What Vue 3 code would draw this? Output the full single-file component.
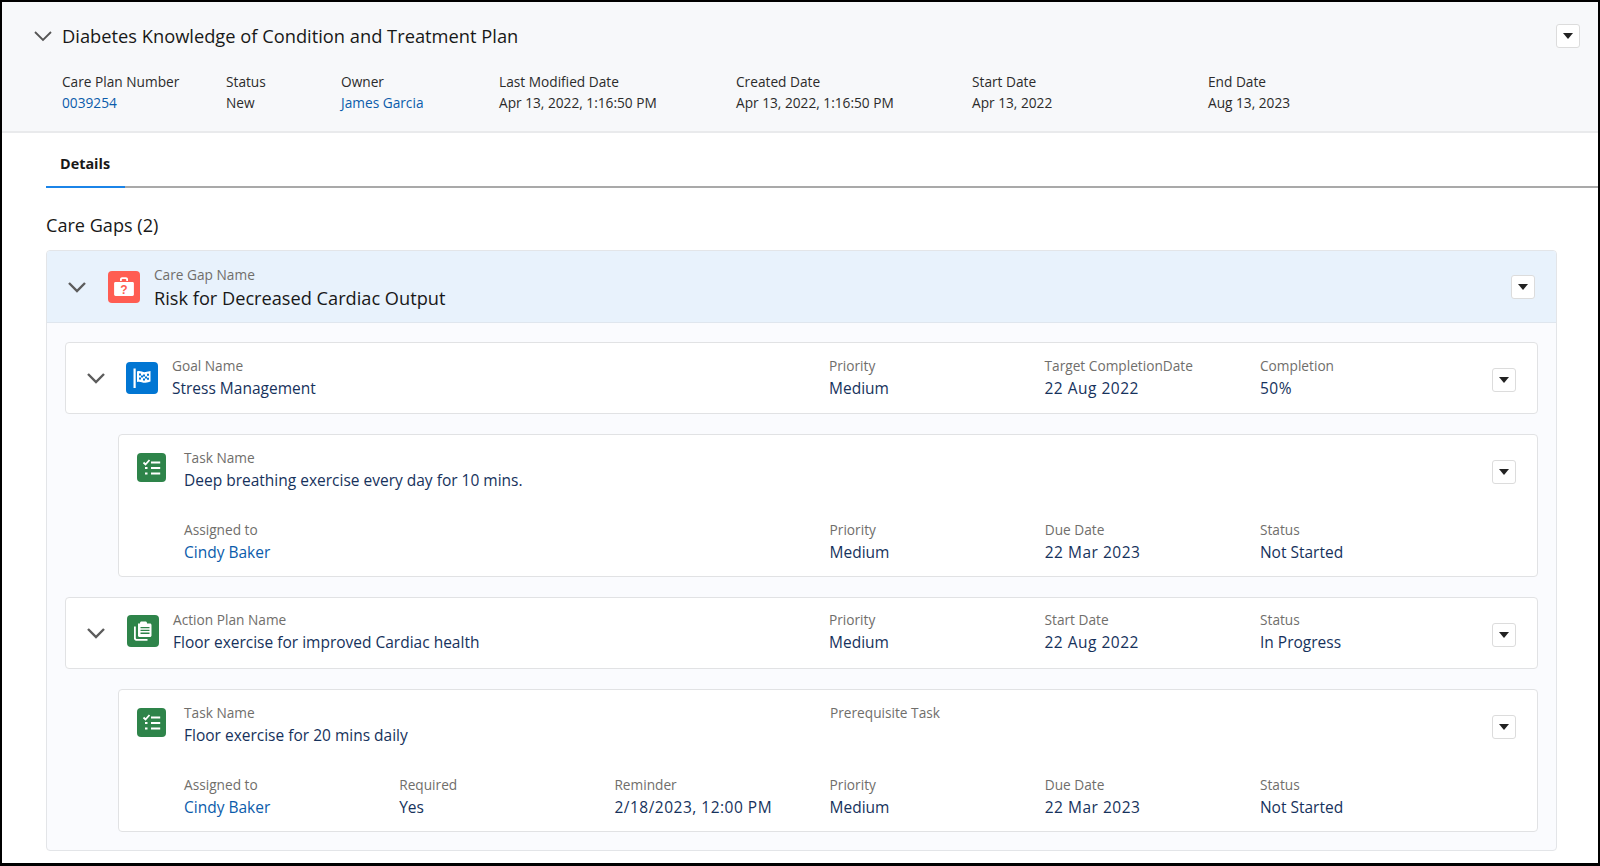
<template>
  <div class="page">
    <!-- 计划头部 -->
    <header class="plan-head">
      <div class="plan-title">
        <svg class="chev chev-sm" viewBox="0 0 20 12"><path d="M2 2l8 8 8-8" /></svg>
        <h1>Diabetes Knowledge of Condition and Treatment Plan</h1>
        <button class="menu-btn"><i></i></button>
      </div>
      <div class="plan-fields">
        <div v-for="f in planFields" :key="f.label" class="plan-field" :style="{ width: f.width + 'px' }">
          <span class="plan-label">{{ f.label }}</span>
          <span :class="f.link ? 'plan-link' : 'plan-value'">{{ f.value }}</span>
        </div>
      </div>
    </header>

    <nav class="tabs">
      <a class="tab">Details</a>
    </nav>

    <h2 class="section-title">Care Gaps (2)</h2>

    <section class="gap">
      <div class="gap-head">
        <svg class="chev" viewBox="0 0 20 12"><path d="M2 2l8 8 8-8" /></svg>
        <svg class="icon icon-lg red" viewBox="0 0 32 32">
          <path d="M12 10V8.2C12 7 13 6.2 14 6.2h4c1 0 2 .8 2 2V10h-1.800V8.600c0-.4-.3-.7-.7-.7h-3c-.4 0-.7.3-.7.7V10z" fill="#fff" />
          <path d="M7.500 11h17c.8 0 1.400.6 1.400 1.400v11.200c0 .8-.6 1.400-1.400 1.400h-17c-.8 0-1.400-.6-1.400-1.400V12.400c0-.8.6-1.400 1.400-1.400z" fill="#fff" />
          <text x="16" y="23" text-anchor="middle" class="qmark">?</text>
        </svg>
        <div class="gap-text">
          <span class="label">Care Gap Name</span>
          <span class="gap-name">Risk for Decreased Cardiac Output</span>
        </div>
        <button class="menu-btn"><i></i></button>
      </div>

      <div class="gap-body">
        <template v-for="p in plans" :key="p.name">
          <div class="card row-card" :class="'row-' + p.icon">
            <svg class="chev" viewBox="0 0 20 12"><path d="M2 2l8 8 8-8" /></svg>
            <svg v-if="p.icon === 'goal'" class="icon icon-lg blue" viewBox="0 0 32 32">
              <path d="M7.500 6.500h2.200V26H7.500z" fill="#fff" />
              <path d="M11 9.500c3-1.300 5.500 1 8.500.6 1.900-.2 3.500-.7 5-1.100v10.500c-1.500.6-3.100 1-5 1.200-3 .4-5.500-1.900-8.500-.6z" fill="#fff" />
              <path d="M13 11.500h2v2h-2zM17 12.500h2v2h-2zM21 11.800h2v2h-2zM15 13.500h2v2h-2zM19 14.500h2v2h-2zM13 15.500h2v2h-2zM17 16.500h2v2h-2zM21 15.800h2v2h-2z" fill="#0176d3" />
            </svg>
            <svg v-else class="icon icon-lg green" viewBox="0 0 32 32">
              <path d="M7 11.500h1.800v11.600c0 .5.400.9.900.9h10.800v1.800H9.200C8 25.800 7 24.800 7 23.600z" fill="#fff" />
              <path d="M11 8.500h2v-.5c0-.9.700-1.500 1.500-1.500h4c.8 0 1.500.6 1.500 1.500v.5h3c.8 0 1.500.7 1.500 1.500v10.500c0 .8-.7 1.500-1.500 1.500H12.500c-.8 0-1.500-.7-1.500-1.500z" fill="#fff" />
              <path d="M13.500 12h9v1.300h-9zM13.500 14.800h9v1.300h-9zM13.500 17.600h9v1.300h-9z" fill="#2e844a" />
            </svg>
            <div class="main">
              <span class="label">{{ p.label }}</span>
              <span class="value">{{ p.name }}</span>
            </div>
            <div v-for="f in p.fields" :key="f.label" class="col">
              <span class="label">{{ f.label }}</span>
              <span class="value" :class="{ num: hasDigit(f.value) }">{{ f.value }}</span>
            </div>
            <button class="menu-btn"><i></i></button>
          </div>

          <div class="card task-card">
            <div class="task-top">
              <svg class="icon icon-sm green" viewBox="0 0 29 29">
                <path d="M6.500 9.500l2 2L12.500 7" class="tick" />
                <path d="M14 8.500h9.200v1.900H14zM14 14h9.200v1.900H14zM14 19.500h9.200v1.900H14zM8 14h2.500v1.900H8zM8 19.500h2.500v1.900H8z" fill="#fff" />
              </svg>
              <div class="task-main">
                <span class="label">Task Name</span>
                <span class="value">{{ p.task.name }}</span>
              </div>
              <div v-if="p.task.prereq" class="col prereq">
                <span class="label">Prerequisite Task</span>
              </div>
              <button class="menu-btn"><i></i></button>
            </div>
            <div class="task-grid">
              <div v-for="(f, i) in p.task.fields" :key="f.label + i" class="grid-cell">
                <span class="label">{{ f.label }}</span>
                <span :class="[f.link ? 'link' : 'value', { num: hasDigit(f.value) }]">{{ f.value }}</span>
              </div>
            </div>
          </div>
        </template>
      </div>
    </section>
  </div>
</template>

<script setup>
const planFields = [
  { label: 'Care Plan Number', value: '0039254', width: 164, link: true },
  { label: 'Status', value: 'New', width: 115 },
  { label: 'Owner', value: 'James Garcia', width: 158, link: true },
  { label: 'Last Modified Date', value: 'Apr 13, 2022, 1:16:50 PM', width: 237 },
  { label: 'Created Date', value: 'Apr 13, 2022, 1:16:50 PM', width: 236 },
  { label: 'Start Date', value: 'Apr 13, 2022', width: 236 },
  { label: 'End Date', value: 'Aug 13, 2023', width: 200 }
]

const plans = [
  {
    icon: 'goal',
    label: 'Goal Name',
    name: 'Stress Management',
    fields: [
      { label: 'Priority', value: 'Medium' },
      { label: 'Target CompletionDate', value: '22 Aug 2022' },
      { label: 'Completion', value: '50%' }
    ],
    task: {
      name: 'Deep breathing exercise every day for 10 mins.',
      fields: [
        { label: 'Assigned to', value: 'Cindy Baker', link: true },
        { label: '', value: '' },
        { label: '', value: '' },
        { label: 'Priority', value: 'Medium' },
        { label: 'Due Date', value: '22 Mar 2023' },
        { label: 'Status', value: 'Not Started' }
      ]
    }
  },
  {
    icon: 'plan',
    label: 'Action Plan Name',
    name: 'Floor exercise for improved Cardiac health',
    fields: [
      { label: 'Priority', value: 'Medium' },
      { label: 'Start Date', value: '22 Aug 2022' },
      { label: 'Status', value: 'In Progress' }
    ],
    task: {
      name: 'Floor exercise for 20 mins daily',
      prereq: true,
      fields: [
        { label: 'Assigned to', value: 'Cindy Baker', link: true },
        { label: 'Required', value: 'Yes' },
        { label: 'Reminder', value: '2/18/2023, 12:00 PM' },
        { label: 'Priority', value: 'Medium' },
        { label: 'Due Date', value: '22 Mar 2023' },
        { label: 'Status', value: 'Not Started' }
      ]
    }
  }
]

// 数字在参考字体里更宽，单独加一点字距
const hasDigit = (s) => /\d/.test(s)
</script>

<style scoped>
.page {
  box-sizing: border-box;
  width: 1600px;
  height: 866px;
  overflow: hidden;
  border: 2px solid #000;
  border-bottom-width: 3px;
  background: #fff;
  font-family: "Open Sans", "Noto Sans", sans-serif;
  color: #181818;
}

/* 头部 */
.plan-head {
  box-sizing: border-box;
  height: 131px;
  padding: 19px 18px 0 31px;
  background: #f7f8fa;
  border-bottom: 2px solid #e9eaec;
}

.plan-title {
  display: flex;
  align-items: center;
  height: 30px;
}

.plan-title h1 {
  margin: 0 0 0 9px;
  font-size: 18.3px;
  font-weight: 400;
  line-height: 30px;
}

.plan-fields {
  display: flex;
  margin: 20px 0 0 29px;
}

.plan-field {
  display: flex;
  flex-direction: column;
  font-size: 13.7px;
  line-height: 21px;
}

.plan-label,
.plan-value {
  color: #2b2b2b;
}

.plan-link {
  color: #0b5cab;
}

/* 标签页 */
.tabs {
  height: 53px;
  margin-left: 44px;
  border-bottom: 2px solid #a9a9a9;
  display: flex;
  box-sizing: content-box;
}

.tab {
  width: 79px;
  box-sizing: border-box;
  margin-bottom: -2px;
  padding: 20px 0 0 14px;
  border-bottom: 2px solid #1b84e8;
  font-size: 14.4px;
  font-weight: 700;
  line-height: 22px;
}

.section-title {
  margin: 24px 0 12px 44px;
  font-size: 18.1px;
  font-weight: 400;
  line-height: 26px;
}

/* 护理缺口 */
.gap {
  box-sizing: border-box;
  width: 1511px;
  margin-left: 44px;
  border: 1px solid #e3e5e8;
  border-radius: 4px;
  background: #fafbfe;
  overflow: hidden;
}

.gap-head {
  display: flex;
  align-items: center;
  height: 71px;
  padding: 0 21px 0 20px;
  background: #e8f2fc;
  border-bottom: 1px solid #dfe6ee;
}

.gap-head .icon {
  margin-left: 1px;
}

.gap-text {
  display: flex;
  flex-direction: column;
  margin: 2px 0 0 14px;
}

.gap-name {
  font-size: 18.2px;
  line-height: 25px;
  color: #181818;
}

.gap-body {
  display: flex;
  flex-direction: column;
  gap: 20px;
  padding: 19px 18px 18px 18px;
}

.card {
  box-sizing: border-box;
  background: #fff;
  border: 1px solid #e1e2e4;
  border-radius: 4px;
}

.row-card {
  display: flex;
  align-items: center;
  height: 72px;
  padding: 0 21px 0 20px;
}

.row-card .menu-btn {
  margin-top: 3px;
}

.row-card .main,
.row-card .col {
  margin-top: -1px;
}

.row-plan .main,
.row-plan .col {
  margin-top: -4px;
}

.row-plan .icon {
  margin: -4px 0 0 1px;
}

.row-plan .main {
  width: 656px;
}

.task-card {
  margin-left: 53px;
  height: 143px;
  padding: 12px 21px 0 18px;
}

.task-top {
  display: flex;
  align-items: flex-start;
}

.task-main {
  width: 646px;
  margin-left: 18px;
  display: flex;
  flex-direction: column;
}

.task-top .icon {
  margin-top: 6px;
}

.task-top .menu-btn {
  margin-top: 13px;
}

.prereq {
  width: 430px;
}

.task-grid {
  display: grid;
  grid-template-columns: repeat(6, 215.2px);
  margin: 27px 0 0 47px;
}

.grid-cell,
.col,
.main {
  display: flex;
  flex-direction: column;
}

.col {
  width: 215.5px;
}

.main {
  width: 657px;
  margin-left: 14px;
}

.label {
  font-size: 13.7px;
  line-height: 22px;
  min-height: 22px;
  color: #706e6b;
}

.value,
.link {
  font-size: 15.5px;
  line-height: 23px;
  min-height: 23px;
  color: #16325c;
}

.link {
  color: #0b5cab;
}

.num {
  letter-spacing: 0.5px;
}

.chev {
  flex: none;
  width: 20px;
  height: 12px;
  margin-right: 20px;
  fill: none;
  stroke: #5c5c5c;
  stroke-width: 2.4;
}

.chev-sm {
  width: 20px;
  height: 12px;
  margin: 0;
  stroke: #555;
  stroke-width: 1.8;
}

.icon {
  flex: none;
  border-radius: 4px;
}

.icon-lg {
  width: 32px;
  height: 32px;
}

.icon-sm {
  width: 29px;
  height: 29px;
}

.red {
  background: #ff5d52;
}

.blue {
  background: #0176d3;
}

.green {
  background: #2e844a;
}

.qmark {
  font-family: "Liberation Sans", sans-serif;
  font-size: 12px;
  font-weight: 700;
  fill: #ff5d52;
}

.tick {
  fill: none;
  stroke: #fff;
  stroke-width: 1.8;
}

.menu-btn {
  flex: none;
  width: 24px;
  height: 24px;
  margin-left: auto;
  padding: 0;
  display: flex;
  align-items: center;
  justify-content: center;
  background: #fff;
  border: 1px solid #dcdcdc;
  border-radius: 3px;
}

.menu-btn i {
  width: 0;
  height: 0;
  border-left: 5px solid transparent;
  border-right: 5px solid transparent;
  border-top: 6px solid #222;
}
</style>
